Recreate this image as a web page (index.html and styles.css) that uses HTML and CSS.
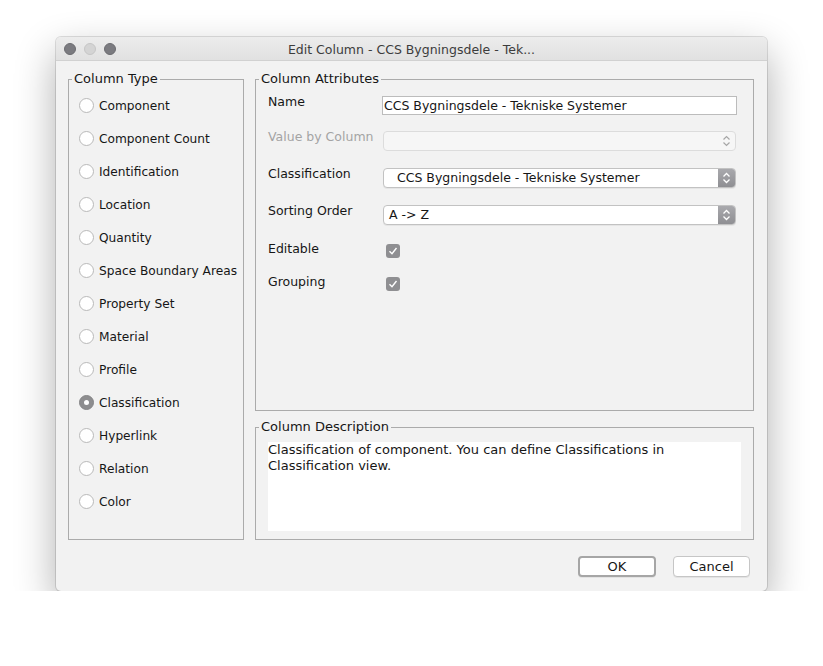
FILE: index.html
```html
<!DOCTYPE html>
<html lang="en">
<head>
    <meta charset="UTF-8">
    <meta name="viewport" content="width=device-width, initial-scale=1.0">
    <title>Edit Column</title>
    <link rel="stylesheet" href="styles.css">
</head>
<body>
    <!-- DIALOG WINDOW -->
    <div class="window">
        <div class="titlebar">
            <div class="lights">
                <span class="light"></span>
                <span class="light off"></span>
                <span class="light"></span>
            </div>
            <div class="title">Edit Column - CCS Bygningsdele - Tek...</div>
            <div></div>
        </div>

        <div class="content">
            <div class="panes">
                <!-- COLUMN TYPE -->
                <fieldset class="group type-group">
                    <legend>Column Type</legend>
                    <div class="radio-list">
                        <label class="radio-row"><span class="radio"></span>Component</label>
                        <label class="radio-row"><span class="radio"></span>Component Count</label>
                        <label class="radio-row"><span class="radio"></span>Identification</label>
                        <label class="radio-row"><span class="radio"></span>Location</label>
                        <label class="radio-row"><span class="radio"></span>Quantity</label>
                        <label class="radio-row"><span class="radio"></span>Space Boundary Areas</label>
                        <label class="radio-row"><span class="radio"></span>Property Set</label>
                        <label class="radio-row"><span class="radio"></span>Material</label>
                        <label class="radio-row"><span class="radio"></span>Profile</label>
                        <label class="radio-row"><span class="radio checked"></span>Classification</label>
                        <label class="radio-row"><span class="radio"></span>Hyperlink</label>
                        <label class="radio-row"><span class="radio"></span>Relation</label>
                        <label class="radio-row"><span class="radio"></span>Color</label>
                    </div>
                </fieldset>

                <div class="right-col">
                    <!-- COLUMN ATTRIBUTES -->
                    <fieldset class="group attr-group">
                        <legend>Column Attributes</legend>
                        <div class="attr-body">
                            <div class="attr-row">
                                <span class="attr-label">Name</span>
                                <div class="text-field">CCS Bygningsdele - Tekniske Systemer</div>
                            </div>

                            <div class="attr-row row-value">
                                <span class="attr-label disabled">Value by Column</span>
                                <div class="combo disabled">
                                    <span class="combo-text"></span>
                                    <span class="combo-btn">
                                        <svg width="17" height="18" viewBox="0 0 17 18"><path d="M5.5 7.5 L8.5 4.5 L11.5 7.5 M5.5 10.5 L8.5 13.5 L11.5 10.5" fill="none" stroke="#a6a6a6" stroke-width="1.2"/></svg>
                                    </span>
                                </div>
                            </div>

                            <div class="attr-row">
                                <span class="attr-label">Classification</span>
                                <div class="combo">
                                    <span class="combo-text wide">CCS Bygningsdele - Tekniske Systemer</span>
                                    <span class="combo-btn">
                                        <svg width="17" height="18" viewBox="0 0 17 18"><path d="M5.5 7.5 L8.5 4.5 L11.5 7.5 M5.5 10.5 L8.5 13.5 L11.5 10.5" fill="none" stroke="#fff" stroke-width="1.3"/></svg>
                                    </span>
                                </div>
                            </div>

                            <div class="attr-row">
                                <span class="attr-label">Sorting Order</span>
                                <div class="combo">
                                    <span class="combo-text">A -&gt; Z</span>
                                    <span class="combo-btn">
                                        <svg width="17" height="18" viewBox="0 0 17 18"><path d="M5.5 7.5 L8.5 4.5 L11.5 7.5 M5.5 10.5 L8.5 13.5 L11.5 10.5" fill="none" stroke="#fff" stroke-width="1.3"/></svg>
                                    </span>
                                </div>
                            </div>

                            <div class="attr-row row-editable">
                                <span class="attr-label">Editable</span>
                                <span class="checkbox">
                                    <svg width="14" height="14" viewBox="0 0 14 14"><path d="M3.5 7.2 L6 9.7 L10.5 4" fill="none" stroke="#fff" stroke-width="1.4"/></svg>
                                </span>
                            </div>

                            <div class="attr-row row-grouping">
                                <span class="attr-label">Grouping</span>
                                <span class="checkbox">
                                    <svg width="14" height="14" viewBox="0 0 14 14"><path d="M3.5 7.2 L6 9.7 L10.5 4" fill="none" stroke="#fff" stroke-width="1.4"/></svg>
                                </span>
                            </div>
                        </div>
                    </fieldset>

                    <!-- COLUMN DESCRIPTION -->
                    <fieldset class="group desc-group">
                        <legend>Column Description</legend>
                        <div class="desc-body">
                            <div class="desc-text">Classification of component. You can define Classifications in Classification view.</div>
                        </div>
                    </fieldset>
                </div>
            </div>

            <div class="buttons">
                <button class="btn btn-default">OK</button>
                <button class="btn">Cancel</button>
            </div>
        </div>
    </div>
</body>
</html>
```

FILE: styles.css
```css
body {
    margin: 0;
    padding: 37px 0 0 56px;
    background: #ffffff;
    font-family: "DejaVu Sans", "Liberation Sans", sans-serif;
    font-size: 12.5px;
    color: #161616;
}

.window {
    width: 711px;
    height: 554px;
    box-sizing: border-box;
    background: #f2f2f2;
    border-radius: 5px;
    overflow: hidden;
    box-shadow: 0 0 0 1px rgba(0,0,0,0.12), 0 16px 40px rgba(0,0,0,0.32);
}

/* Title bar */
.titlebar {
    display: grid;
    grid-template-columns: 1fr auto 1fr;
    align-items: center;
    height: 23px;
    background: linear-gradient(#ececec, #e1e1e1);
    border-bottom: 1px solid #d1d1d1;
}

.lights {
    display: flex;
    gap: 8px;
    padding-left: 8px;
}

.light {
    width: 12px;
    height: 12px;
    border-radius: 50%;
    box-sizing: border-box;
    background: #7b7b80;
    border: 1px solid #6c6c70;
}

.light.off {
    background: #d4d4d4;
    border-color: #c6c6c6;
}

.title {
    color: #3c3c3c;
    white-space: nowrap;
    padding-top: 1px;
}

/* Content */
.content {
    padding: 11px 13px 13px 12px;
}

.panes {
    display: flex;
    gap: 11px;
    height: 468px;
}

.group {
    margin: 0;
    padding: 0;
    min-width: 0;
    border: 1px solid #ababab;
    box-sizing: border-box;
}

.group legend {
    margin-left: 3px;
    padding: 0 2px;
    line-height: 14px;
    font-size: 13px;
}

.type-group {
    width: 176px;
}

.radio-list {
    display: flex;
    flex-direction: column;
    padding: 3px 0 0 10px;
    font-size: 12.2px;
}

.radio-row {
    display: flex;
    align-items: center;
    gap: 5px;
    height: 33px;
    white-space: nowrap;
}

.radio {
    width: 15px;
    height: 15px;
    flex: none;
    box-sizing: border-box;
    border-radius: 50%;
    background: #ffffff;
    border: 1px solid #b9b9b9;
    display: flex;
    align-items: center;
    justify-content: center;
}

.radio.checked {
    background: #8d8d8f;
    border-color: #858587;
}

.radio.checked::after {
    content: '';
    width: 5px;
    height: 5px;
    border-radius: 50%;
    background: #ffffff;
}

.right-col {
    flex: 1;
    display: flex;
    flex-direction: column;
    gap: 9px;
    min-width: 0;
}

/* Column attributes */
.attr-group {
    flex: 1;
}

.attr-body {
    padding: 10px 0 0 12px;
}

.attr-row {
    display: flex;
    align-items: flex-start;
    height: 20px;
    margin-top: 17px;
}

.attr-row:first-child {
    margin-top: 0;
}

.attr-row.row-value {
    margin-top: 15px;
}

.attr-row.row-editable {
    margin-top: 16px;
}

.attr-row.row-grouping {
    margin-top: 13px;
}

.attr-label {
    width: 114px;
    flex: none;
    line-height: 12px;
    white-space: nowrap;
}

.row-editable .attr-label,
.row-grouping .attr-label {
    line-height: 15px;
}

.attr-label.disabled {
    color: #a4a4a4;
}

.text-field {
    width: 355px;
    height: 19px;
    box-sizing: border-box;
    background: #ffffff;
    border: 1px solid #bcbcbc;
    padding-left: 1px;
    line-height: 17px;
    white-space: nowrap;
}

.combo {
    display: flex;
    width: 353px;
    height: 20px;
    margin-left: 1px;
    box-sizing: border-box;
    background: #ffffff;
    border: 1px solid #c2c2c2;
    border-radius: 4px;
    overflow: hidden;
    box-shadow: 0 1px 0 rgba(0,0,0,0.05);
}

.combo-text {
    flex: 1;
    padding-left: 5px;
    line-height: 18px;
    white-space: nowrap;
}

.combo-text.wide {
    padding-left: 13px;
}

.combo-btn {
    width: 17px;
    display: flex;
    background: linear-gradient(#a9a9ad, #8f8f93);
}

.combo.disabled {
    background: #f6f6f6;
    border-color: #dcdcdc;
    box-shadow: none;
}

.combo.disabled .combo-btn {
    background: none;
}

.checkbox {
    width: 14px;
    height: 14px;
    margin: 3px 0 0 4px;
    border-radius: 3px;
    background: #8f8f92;
    display: flex;
}

/* Column description */
.desc-group {
    height: 120px;
    flex: none;
}

.desc-body {
    padding: 8px 12px 8px 12px;
}

.desc-text {
    height: 89px;
    background: #ffffff;
    font-size: 13px;
    line-height: 16px;
}

/* Buttons */
.buttons {
    display: flex;
    justify-content: flex-end;
    gap: 17px;
    margin-top: 16px;
    padding-right: 4px;
}

.btn {
    width: 77px;
    height: 21px;
    padding: 0;
    font-family: inherit;
    font-size: 13px;
    color: #161616;
    background: #ffffff;
    border: 1px solid #c6c6c6;
    border-radius: 4px;
    box-shadow: 0 1px 0 rgba(0,0,0,0.06);
}

.btn-default {
    width: 78px;
    border: 2px solid #a6a6a6;
}
```
